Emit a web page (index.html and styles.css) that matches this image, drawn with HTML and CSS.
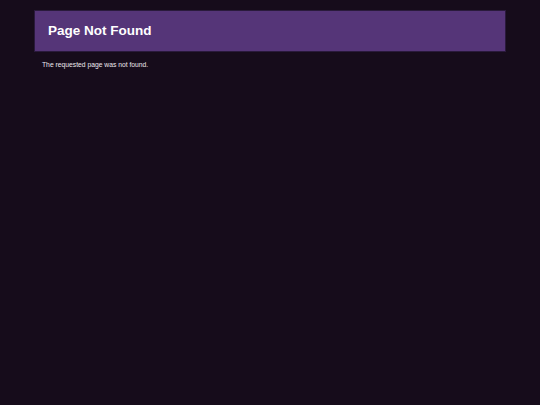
FILE: index.html
```html
<!DOCTYPE html>
<html lang="en">
<head>
<meta charset="utf-8">
<title>Page Not Found</title>
<link rel="stylesheet" href="styles.css">
</head>
<body>
<main class="page">
  <header class="banner">
    <h1 class="banner-title">Page Not Found</h1>
  </header>
  <p class="message">The requested page was not found.</p>
</main>
</body>
</html>
```

FILE: styles.css
```css
html, body {
  margin: 0;
  padding: 0;
  background: #160c1b;
  height: 100%;
}
body {
  font-family: "Liberation Sans", Arial, sans-serif;
  color: #f2eef4;
}
.page {
  padding: 9.5px 34px 0;
}
.banner {
  background: #553578;
  border: 1px solid #2a1a3c;
  padding: 12.5px 13px 12px;
}
.banner-title {
  margin: 0;
  font-size: 13.5px;
  font-weight: 700;
  line-height: 15.5px;
  color: #ffffff;
}
.message {
  margin: 9.5px 0 0;
  padding-left: 8px;
  font-size: 6.75px;
  line-height: 7.75px;
  color: #ece8ee;
}
```
